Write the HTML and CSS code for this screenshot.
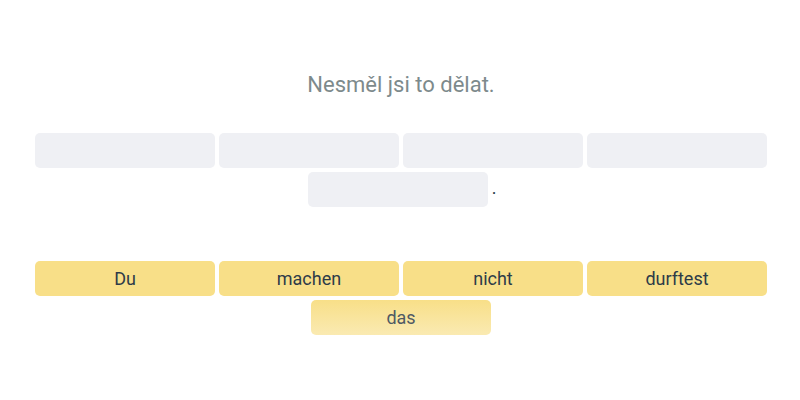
FILE: index.html
```html
<!DOCTYPE html>
<html lang="cs">
<head>
    <meta charset="UTF-8">
    <title>Přelož větu</title>
    <link rel="stylesheet" href="styles.css">
</head>
<body>
    <div class="exercise">
        <p class="prompt">Nesměl jsi to dělat.</p>

        <div class="answer">
            <div class="slot"></div>
            <div class="slot"></div>
            <div class="slot"></div>
            <div class="slot"></div>
            <div class="slot"></div>
            <span class="punct">.</span>
        </div>

        <div class="bank">
            <button class="word">Du</button>
            <button class="word">machen</button>
            <button class="word">nicht</button>
            <button class="word">durftest</button>
            <button class="word word-fade">das</button>
        </div>
    </div>
</body>
</html>
```
FILE: styles.css
```css
body {
    margin: 0;
    background-color: #fff;
    font-family: Roboto, "Liberation Sans", sans-serif;
}
.exercise {
    width: 732px;
    margin: 0 auto;
    padding: 72px 0 0 2px;
}
.prompt {
    margin: 0;
    text-align: center;
    font-size: 22px;
    line-height: 26px;
    color: #7d8a8c;
}
.answer {
    display: flex;
    flex-wrap: wrap;
    justify-content: center;
    align-items: flex-end;
    gap: 4px;
    margin-top: 35px;
}
.slot {
    width: 180px;
    height: 35px;
    border-radius: 5px;
    background-color: #eff0f4;
}
.punct {
    margin-right: -2px;
    font-size: 18px;
    line-height: 22px;
    color: #2d3b48;
    padding-bottom: 8px;
}
.bank {
    display: flex;
    flex-wrap: wrap;
    justify-content: center;
    gap: 4px;
    margin-top: 54px;
}
.word {
    width: 180px;
    height: 35px;
    padding: 0;
    border: none;
    border-radius: 5px;
    background-color: #f8df88;
    font-family: inherit;
    font-size: 18px;
    color: #2d3b48;
}
.word-fade {
    background: linear-gradient(#f8df88, #faeab2);
    color: #4f5a64;
}
```
